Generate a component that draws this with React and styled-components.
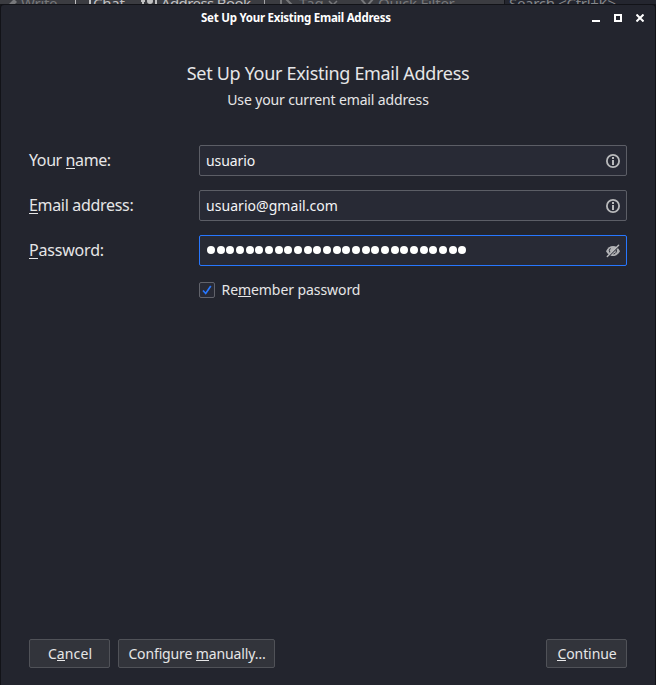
import React from "react";
import styled, { createGlobalStyle, css } from "styled-components";

const GlobalStyle = createGlobalStyle`
  *, *::before, *::after { box-sizing: border-box; }
  body {
    margin: 0;
    background: #23252e;
    font-family: "Noto Sans", "Open Sans", sans-serif;
    color: #e6e6e7;
    overflow: hidden;
  }
  button, input { font: inherit; color: inherit; }
`;

const Screen = styled.div`
  width: 656px;
  height: 685px;
  display: flex;
  flex-direction: column;
  background: #15161b;
  overflow: hidden;
`;

const Toolbar = styled.div`
  height: 4px;
  flex: none;
  display: flex;
  background: #3b3c41;
  overflow: hidden;
`;

const ToolItem = styled.div`
  width: ${(p) => p.$width}px;
  flex: none;
  height: 20px;
  margin-top: -7px;
  padding-left: ${(p) => p.$indent || 0}px;
  display: flex;
  align-items: center;
  gap: ${(p) => p.$gap || 0}px;
  font-size: 15px;
  line-height: 20px;
  letter-spacing: ${(p) => p.$track || 0}px;
  white-space: nowrap;
  color: ${(p) => (p.$muted ? "#77787b" : "#c0c0c1")};
  svg { flex: none; }
`;

const ToolSeparator = styled.div`
  width: 1px;
  flex: none;
  background: #a5a5a7;
`;

const SearchBox = styled.div`
  flex: 1;
  height: 20px;
  margin-top: -7px;
  padding-left: 4px;
  border-left: 1px solid #15161b;
  background: #24262f;
  color: #85868a;
  font-size: 15px;
  line-height: 20px;
  letter-spacing: -0.3px;
  white-space: nowrap;
`;

const Window = styled.main`
  flex: 1;
  min-height: 0;
  display: flex;
  flex-direction: column;
  background: #23252e;
  border: 1px solid #121318;
  border-bottom: 0;
  border-radius: 4px 4px 0 0;
`;

const TitleBar = styled.header`
  height: 26px;
  flex: none;
  display: flex;
  align-items: center;
  justify-content: space-between;
  padding: 0 11px 0 200px;
`;

const WindowTitle = styled.div`
  font-size: 11.5px;
  font-weight: 700;
  line-height: 18px;
  letter-spacing: -0.25px;
  color: #fff;
`;

const WindowControls = styled.div`
  display: flex;
  gap: 14px;
  svg { display: block; }
`;

const Intro = styled.div`
  padding-top: 29px;
  height: 114px;
  flex: none;
  text-align: center;
`;

const Heading = styled.h1`
  margin: 0;
  font-size: 18px;
  font-weight: 400;
  line-height: 27px;
  letter-spacing: -0.32px;
`;

const Subheading = styled.p`
  margin: 0;
  font-size: 14px;
  line-height: 26px;
  letter-spacing: -0.14px;
`;

const Form = styled.form`
  padding: 0 28px;
  display: grid;
  grid-template-columns: 170px 1fr;
  row-gap: 14px;
`;

const Label = styled.label`
  font-size: 16px;
  line-height: 30px;
  letter-spacing: ${(p) => p.$track || 0}px;
`;

const Key = styled.span`
  display: inline-block;
  height: 1.1em;
  line-height: 1.16em;
  border-bottom: 1px solid currentColor;
`;

const Field = styled.div`
  height: 31px;
  padding: 0 6px;
  display: flex;
  align-items: center;
  background: #282a35;
  border: 1px solid ${(p) => (p.$focused ? "#2777ff" : "#5c5e66")};
  border-radius: 2px;
  svg { flex: none; display: block; }
`;

const Input = styled.input`
  flex: 1;
  min-width: 0;
  padding: 0;
  border: 0;
  outline: 0;
  background: transparent;
  font-size: 14px;
  line-height: 20px;
  letter-spacing: ${(p) => p.$track || 0}px;
  color: #f4f4f5;
`;

const PasswordDots = styled.div`
  flex: 1;
  display: flex;
  gap: 1.68px;
  padding: 0 0 1px 1px;
`;

const Dot = styled.i`
  width: 8px;
  height: 8px;
  flex: none;
  border-radius: 50%;
  background: #fff;
`;

const Remember = styled.label`
  grid-column: 2;
  margin-top: 1px;
  height: 18px;
  display: flex;
  align-items: center;
  gap: 6.5px;
  font-size: 14px;
  line-height: 18px;
  letter-spacing: -0.07px;
`;

const Check = styled.span`
  width: 16px;
  height: 16px;
  flex: none;
  display: grid;
  place-items: center;
  background: #282a35;
  border: 1px solid #61636b;
  border-radius: 2px;
`;

const Footer = styled.footer`
  margin-top: auto;
  padding: 0 28px 17px;
  display: flex;
  gap: 8px;
`;

const Button = styled.button`
  width: ${(p) => p.$width}px;
  height: 29px;
  padding: 0 0 0 1px;
  background: #32343b;
  border: 1px solid #505258;
  border-radius: 2px;
  font-size: 14px;
  line-height: 20px;
  letter-spacing: ${(p) => p.$track || 0}px;
  white-space: nowrap;
  ${(p) => p.$end && css`margin-left: auto;`}
`;

const InfoIcon = () => (
  <svg width="14" height="14" viewBox="0 0 14 14">
    <circle cx="7" cy="7" r="6.1" fill="none" stroke="#b9babc" strokeWidth="1.8" />
    <path d="M6 3h2v2H6zM6 6h2v5H6z" fill="#b9babc" />
  </svg>
);

const HiddenIcon = () => (
  <svg width="14" height="14" viewBox="0 0 14 14">
    <path d="M0 7.3C1.5 3.8 4.200 2 7 2s5.500 1.800 7 5.300c-1.500 3.200-4.200 4.700-7 4.700S1.500 10.500 0 7.300z" fill="#b0b1b4" />
    <path d="M4.400 4.300A3.300 3.300 0 0 0 4 8.600M10.200 5.500A3.300 3.300 0 0 1 7.500 10" fill="none" stroke="#282a35" strokeWidth="1" />
    <path d="M1.300 13.700L13.300 1.700" stroke="#282a35" strokeWidth="1.300" />
    <path d="M1.300 12.600L12.600 1.300" stroke="#b9babc" strokeWidth="1.400" strokeLinecap="round" />
  </svg>
);

const fields = [
  { label: <>Your <Key>n</Key>ame:</>, value: "usuario", labelTrack: -0.4, track: -0.1 },
  { label: <><Key>E</Key>mail address:</>, value: "usuario@gmail.com", labelTrack: -0.32, track: 0.05 },
];

export default function App() {
  return (
    <>
      <GlobalStyle />
      <Screen>
        <Toolbar>
          <ToolItem $width={75} $indent={4} $gap={4} $track={-0.3} $muted>
            <svg width="13" height="14" viewBox="0 0 13 14"><path d="M1 13L3 10L10 3L13 6L6 13Z" fill="currentColor" /></svg>Write
          </ToolItem>
          <ToolItem $width={66} $gap={2} $track={-0.2}>
            <svg width="16" height="14" viewBox="0 0 16 14"><path d="M0 0V11M15 0V11" fill="none" stroke="currentColor" strokeWidth="2" /></svg>Chat
          </ToolItem>
          <ToolItem $width={123} $gap={4} $track={-0.6}>
            <svg width="16" height="14" viewBox="0 0 16 14"><path d="M2 0V14M15 0V14M0 5H4M0 10H4" stroke="currentColor" strokeWidth="2" /><circle cx="9" cy="5" r="3" fill="currentColor" /></svg>Address Book
          </ToolItem>
          <ToolSeparator />
          <ToolItem $width={95} $indent={15} $gap={4} $muted>
            <svg width="15" height="14" viewBox="0 0 15 14"><path d="M1 11V3H5M6 3L14 11" fill="none" stroke="currentColor" strokeWidth="2" /></svg>Tag
            <svg width="10" height="8" viewBox="0 0 10 8"><path d="M1 2L5 6L9 2" fill="none" stroke="currentColor" strokeWidth="1.500" /></svg>
          </ToolItem>
          <ToolItem $width={144} $gap={4} $track={-0.25} $muted>
            <svg width="14" height="14" viewBox="0 0 14 14"><path d="M1 3H13L7 10Z" fill="none" stroke="currentColor" strokeWidth="2" /></svg>Quick Filter
          </ToolItem>
          <SearchBox>Search &lt;Ctrl+K&gt;</SearchBox>
        </Toolbar>
        <Window>
          <TitleBar>
            <WindowTitle>Set Up Your Existing Email Address</WindowTitle>
            <WindowControls>
              <svg width="8" height="8" viewBox="0 0 8 8"><path d="M0 6h8v2H0z" fill="#fff" /></svg>
              <svg width="8" height="8" viewBox="0 0 8 8"><path d="M1 1h6v6H1z" fill="none" stroke="#fff" strokeWidth="2" /></svg>
              <svg width="8" height="8" viewBox="0 0 8 8"><path d="M.5.5l7 7M7.500.5l-7 7" stroke="#fff" strokeWidth="2" /></svg>
            </WindowControls>
          </TitleBar>
          <Intro>
            <Heading>Set Up Your Existing Email Address</Heading>
            <Subheading>Use your current email address</Subheading>
          </Intro>
          <Form>
            {fields.map((f) => (
              <React.Fragment key={f.value}>
                <Label $track={f.labelTrack}>{f.label}</Label>
                <Field><Input $track={f.track} defaultValue={f.value} /><InfoIcon /></Field>
              </React.Fragment>
            ))}
            <Label $track={-0.2}><Key>P</Key>assword:</Label>
            <Field $focused>
              <PasswordDots>{Array.from({ length: 27 }, (_, i) => <Dot key={i} />)}</PasswordDots>
              <HiddenIcon />
            </Field>
            <Remember>
              <Check>
                <svg width="12" height="12" viewBox="0 0 12 12"><path d="M2 6.500L4.700 9.500L9.800 2" fill="none" stroke="#2777ff" strokeWidth="1.700" /></svg>
              </Check>
              <span>Re<Key>m</Key>ember password</span>
            </Remember>
          </Form>
          <Footer>
            <Button $width={81} $track={0.1}>C<Key>a</Key>ncel</Button>
            <Button $width={157} $track={-0.13}>Configure <Key>m</Key>anually…</Button>
            <Button $width={81} $track={-0.08} $end><Key>C</Key>ontinue</Button>
          </Footer>
        </Window>
      </Screen>
    </>
  );
}
